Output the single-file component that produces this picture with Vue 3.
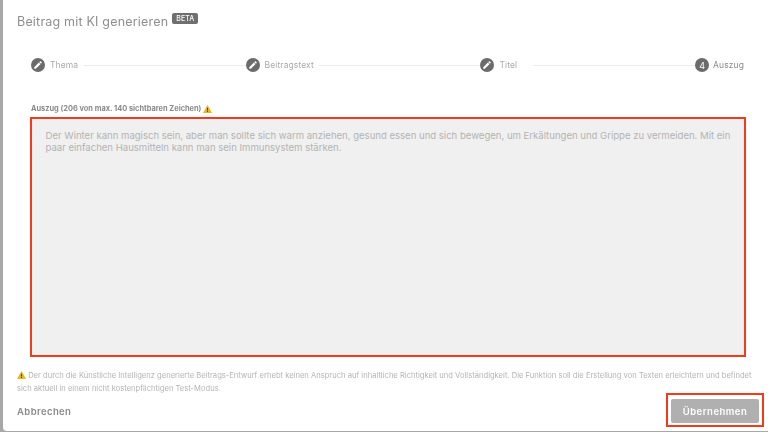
<script setup>
const steps = [
  { label: 'Thema', done: true },
  { label: 'Beitragstext', done: true },
  { label: 'Titel', done: true },
  { label: 'Auszug', done: false, n: 4 },
]
</script>

<template>
  <div class="modal">
    <header class="head">
      <h1 class="title">Beitrag mit KI generieren</h1>
      <span class="beta">BETA</span>
    </header>

    <div class="stepper">
      <div v-for="s in steps" :key="s.label" class="step" :class="{ last: !s.done }">
        <span class="dot">
          <svg v-if="s.done" width="10" height="10" viewBox="0 0 24 24"><path fill="#fff" d="M3 17.25V21h3.75L17.81 9.94l-3.75-3.75L3 17.25zM20.71 7.04a1 1 0 0 0 0-1.41l-2.34-2.34a1 1 0 0 0-1.41 0l-1.83 1.83 3.75 3.75 1.83-1.83z"/></svg>
          <template v-else>{{ s.n }}</template>
        </span>
        <span class="label" :class="{ active: !s.done }">{{ s.label }}</span>
        <span v-if="s.done" class="line"></span>
      </div>
    </div>

    <div class="field-label">
      <span>Auszug (206 von max. 140 sichtbaren Zeichen)</span>
      <svg class="warn" width="9" height="8" viewBox="0 0 18 16"><path fill="#e5b81f" d="M9 0 18 16H0z"/><path fill="#4a3d10" d="M8 5.5h2v5.5H8zM8 12h2v2H8z"/></svg>
    </div>

    <div class="excerpt">Der Winter kann magisch sein, aber man sollte sich warm anziehen, gesund essen und sich bewegen, um Erkältungen und Grippe zu vermeiden. Mit ein paar einfachen Hausmitteln kann man sein Immunsystem stärken.</div>

    <p class="notice">
      <svg class="warn" width="9" height="8" viewBox="0 0 18 16"><path fill="#e5b81f" d="M9 0 18 16H0z"/><path fill="#4a3d10" d="M8 5.5h2v5.5H8zM8 12h2v2H8z"/></svg>
      Der durch die Künstliche Intelligenz generierte Beitrags-Entwurf erhebt keinen Anspruch auf inhaltliche Richtigkeit und Vollständigkeit. Die Funktion soll die Erstellung von Texten erleichtern und befindet sich aktuell in einem nicht kostenpflichtigen Test-Modus.
    </p>

    <footer class="foot">
      <button class="cancel" type="button">Abbrechen</button>
      <span class="highlight"><button class="apply" type="button">Übernehmen</button></span>
    </footer>
  </div>
</template>

<style>
html, body { margin: 0; background: #a8a8a8; }
</style>

<style scoped>
.modal {
  box-sizing: border-box;
  width: 765px;
  height: 431px;
  margin-left: 3px;
  background: #fff;
  border-radius: 0 0 0 4px;
  display: flex;
  flex-direction: column;
  font-family: Inter, "Liberation Sans", sans-serif;
  color: #8f8f8f;
  overflow: hidden;
  filter: blur(0.3px);
}
.head {
  display: flex;
  flex: none;
  align-items: flex-start;
  gap: 4px;
  padding: 12px 0 0 14px;
  height: 47px;
  box-sizing: border-box;
}
.title {
  margin: 0;
  font-size: 12.5px;
  font-weight: 400;
  line-height: 20px;
  color: #8e8e8e;
  letter-spacing: 0.2px;
}
.beta {
  background: #6f6f6f;
  color: #fff;
  font-size: 7px;
  font-weight: 500;
  line-height: 11px;
  padding: 0 4px;
  border-radius: 2px;
  margin-top: 1px;
}
.stepper {
  display: flex;
  flex: none;
  align-items: center;
  height: 14px;
  margin-top: 11px;
  padding: 0 24px 0 28px;
}
.step {
  flex: 1 1 auto;
  display: flex;
  align-items: center;
  gap: 5px;
}
.step.last { flex: none; gap: 4px; }
.dot {
  width: 14px;
  height: 14px;
  border-radius: 50%;
  background: #6b6b6b;
  color: #fff;
  font-size: 9px;
  display: flex;
  align-items: center;
  justify-content: center;
  flex: none;
}
.label {
  font-size: 8.5px;
  color: #ababab;
  letter-spacing: 0.1px;
  min-width: 29px;
}
.label.active { color: #8a8a8a; }
.line {
  flex: 1;
  height: 1px;
  background: #ececec;
}
.field-label {
  display: flex;
  flex: none;
  align-items: center;
  gap: 2px;
  margin: 31px 0 0 28px;
  height: 11px;
  font-size: 7.4px;
  font-weight: 700;
  color: #8a8a8a;
}
.excerpt {
  box-sizing: border-box;
  flex: none;
  width: 716px;
  height: 240px;
  margin: 3px 0 0 26.5px;
  padding: 11px 10px 11px 14px;
  background: #f0f0f0;
  border: 2px solid #f43a1c;
  font-size: 9.55px;
  line-height: 12px;
  color: #b3b3b3;
}
.notice {
  flex: none;
  margin: 12px 14px 0;
  font-size: 7.6px;
  line-height: 13px;
  color: #b4b4b4;
}
.notice .warn { vertical-align: -1px; }
.foot {
  display: flex;
  flex: none;
  align-items: center;
  justify-content: space-between;
  margin-top: -2px;
  padding: 0 4px 4px 14px;
}
.cancel {
  border: 0;
  background: none;
  padding: 0;
  margin-top: 2px;
  font: inherit;
  font-size: 9.5px;
  font-weight: 600;
  letter-spacing: 0.4px;
  color: #8a8a8a;
}
.highlight {
  display: block;
  border: 2px solid #f43a1c;
  padding: 4px 3px 2px;
}
.apply {
  display: block;
  width: 88px;
  height: 24px;
  border: 0;
  border-radius: 2px;
  background: #b0b0b0;
  color: #fff;
  font: inherit;
  font-size: 9.5px;
  font-weight: 600;
  letter-spacing: 0.5px;
}
</style>
